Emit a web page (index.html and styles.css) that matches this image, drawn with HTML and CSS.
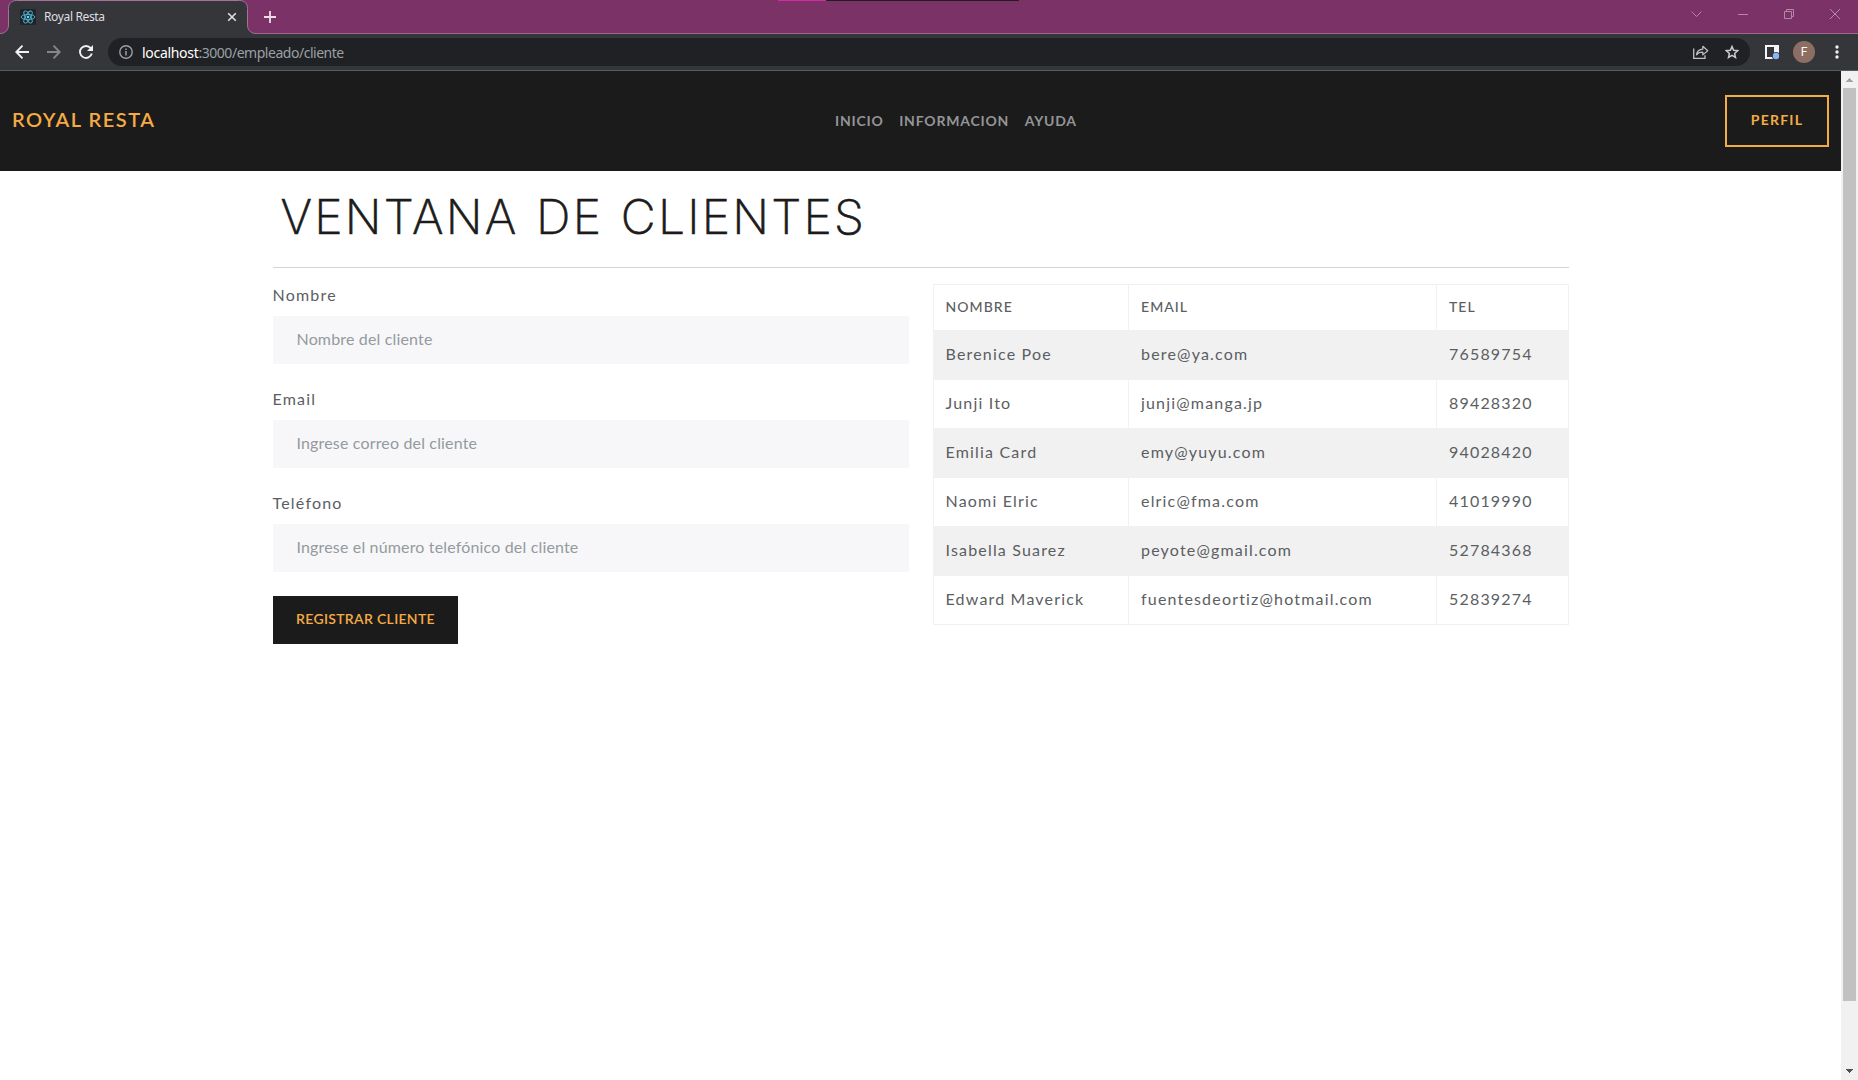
FILE: index.html
```
<!DOCTYPE html>
<html lang="es">
<head>
<meta charset="utf-8">
<title>Royal Resta</title>
<link rel="stylesheet" href="styles.css">
</head>
<body>
<div class="window">
  <div class="tabstrip">
    <div class="topmark"><i class="topmark-pink"></i><i class="topmark-dark"></i></div>
    <div class="tab">
      <svg class="tab-shape" width="256" height="34" viewBox="0 0 256 34">
        <path d="M0 34V33.5C5 33.5 8.5 30 8.5 25V8.5C8.5 3.5 11.5.5 16.500.5H239.500C244.500.5 247.500 3.500 247.500 8.500V25C247.500 30 251 33.500 256 33.500V34Z" fill="#35363a"/>
        <path d="M0 33.500C5 33.500 8.500 30 8.500 25V8.500C8.500 3.500 11.500.5 16.500.5H239.500C244.500.5 247.500 3.500 247.500 8.500V25C247.500 30 251 33.500 256 33.500" fill="none" stroke="#a4729b"/>
      </svg>
      <svg class="favicon" width="16" height="16" viewBox="0 0 16 16">
        <rect width="16" height="16" rx="1.500" fill="#20232a"/>
        <g fill="none" stroke="#4fb3cf" stroke-width=".9">
          <ellipse cx="8" cy="8" rx="6.800" ry="2.600"/>
          <ellipse cx="8" cy="8" rx="6.800" ry="2.600" transform="rotate(60 8 8)"/>
          <ellipse cx="8" cy="8" rx="6.800" ry="2.600" transform="rotate(120 8 8)"/>
        </g>
        <circle cx="8" cy="8" r="1.300" fill="#61dafb"/>
      </svg>
      <span class="tab-title">Royal Resta</span>
      <svg class="tab-close" width="10" height="10" viewBox="0 0 10 10"><path d="M1.200 1.200l7.600 7.600M8.800 1.200L1.200 8.800" stroke="#dfdfe1" stroke-width="1.600"/></svg>
    </div>
    <svg class="newtab" width="12" height="12" viewBox="0 0 12 12"><path d="M6 0v12M0 6h12" stroke="#ecdfe8" stroke-width="1.800"/></svg>
    <div class="controls">
      <svg width="11" height="10" viewBox="0 0 11 10"><path d="M.5 2.500l5 5 5-5" fill="none" stroke="#b586a5"/></svg>
      <svg width="10" height="10" viewBox="0 0 10 10"><path d="M0 5.500h10" stroke="#b586a5"/></svg>
      <svg width="10" height="10" viewBox="0 0 10 10"><path d="M.5 2.500h7v7h-7zM2.500 2.500v-2h7v7h-2" fill="none" stroke="#b586a5"/></svg>
      <svg width="10" height="10" viewBox="0 0 10 10"><path d="M0 0l10 10M10 0L0 10" stroke="#b586a5"/></svg>
    </div>
  </div>
  <div class="toolbar">
    <svg class="nav-icon" width="14" height="14" viewBox="0 0 14 14"><path d="M14 7H1.500M7.500.700L1.300 7l6.200 6.300" fill="none" stroke="#f1f1f1" stroke-width="1.900"/></svg>
    <svg class="nav-icon" width="14" height="14" viewBox="0 0 14 14"><path d="M0 7h12.500M6.500.700L12.700 7l-6.200 6.300" fill="none" stroke="#85868a" stroke-width="1.900"/></svg>
    <svg class="nav-icon" width="14" height="14" viewBox="0 0 14 14"><path d="M12.800 8.600A6 6 0 1 1 11.700 3.200" fill="none" stroke="#f1f1f1" stroke-width="1.900"/><path d="M14 0v6H8z" fill="#f1f1f1"/></svg>
    <div class="omnibox">
      <svg class="info" width="14" height="14" viewBox="0 0 14 14"><circle cx="7" cy="7" r="6.200" fill="none" stroke="#9aa0a6" stroke-width="1.400"/><path d="M7 6v4.500M7 3.400v1.500" stroke="#9aa0a6" stroke-width="1.500"/></svg>
      <span class="url"><b>localhost</b>:3000/empleado/cliente</span>
      <svg class="share" width="16" height="14" viewBox="0 0 16 14"><path d="M.700 3.500v9.800h11.300v-3" fill="none" stroke="#bdc1c6" stroke-width="1.300"/><path d="M3.500 9.800C4 6 6.200 4.400 9.800 4.200V1.300l5 4.400-5 4.200V7.200C7 7.100 5 7.800 3.500 9.800z" fill="none" stroke="#bdc1c6" stroke-width="1.200" stroke-linejoin="round"/></svg>
      <svg class="star" width="14" height="14" viewBox="0 0 14 14"><path d="M7 1.500l1.600 3.800 4.100.4-3.100 2.700.9 4L7 10.300l-3.500 2.100.9-4L1.300 5.700l4.100-.4z" fill="none" stroke="#c9ccd0" stroke-width="1.500"/></svg>
    </div>
    <svg class="panel" width="15" height="15" viewBox="0 0 15 15"><path d="M0 0h14v14H0z" fill="#f5f5f5"/><path d="M2 2h7v10H2z" fill="#35363a"/><circle cx="11" cy="11" r="4" fill="#35363a"/><circle cx="11" cy="11" r="3.200" fill="#8ab4f8"/></svg>
    <span class="avatar">F</span>
    <svg class="dots" width="4" height="14" viewBox="0 0 4 14"><g fill="#f1f1f1"><circle cx="2" cy="2" r="1.700"/><circle cx="2" cy="7" r="1.700"/><circle cx="2" cy="12" r="1.700"/></g></svg>
  </div>
  <div class="viewport">
    <div class="page">
      <header class="navbar">
        <a class="brand">ROYAL RESTA</a>
        <nav class="menu"><a>INICIO</a><a>INFORMACION</a><a>AYUDA</a></nav>
        <a class="profile">PERFIL</a>
      </header>
      <main class="container">
        <h1 class="title">VENTANA DE CLIENTES</h1>
        <div class="columns">
          <form class="form">
            <label for="nombre">Nombre</label>
            <input id="nombre" placeholder="Nombre del cliente">
            <label for="email">Email</label>
            <input id="email" placeholder="Ingrese correo del cliente">
            <label for="tel">Teléfono</label>
            <input id="tel" placeholder="Ingrese el número telefónico del cliente">
            <button class="submit" type="button">REGISTRAR CLIENTE</button>
          </form>
          <table class="clients">
            <colgroup><col class="col-name"><col class="col-email"><col></colgroup>
            <thead><tr><th>NOMBRE</th><th>EMAIL</th><th>TEL</th></tr></thead>
            <tbody>
              <tr><td>Berenice Poe</td><td>bere@ya.com</td><td>76589754</td></tr>
              <tr><td>Junji Ito</td><td>junji@manga.jp</td><td>89428320</td></tr>
              <tr><td>Emilia Card</td><td>emy@yuyu.com</td><td>94028420</td></tr>
              <tr><td>Naomi Elric</td><td>elric@fma.com</td><td>41019990</td></tr>
              <tr><td>Isabella Suarez</td><td>peyote@gmail.com</td><td>52784368</td></tr>
              <tr><td>Edward Maverick</td><td>fuentesdeortiz@hotmail.com</td><td>52839274</td></tr>
            </tbody>
          </table>
        </div>
      </main>
    </div>
    <div class="scrollbar">
      <svg width="17" height="17" viewBox="0 0 17 17" shape-rendering="crispEdges"><path d="M5 11l3.500-4 3.500 4z" fill="#a3a3a3"/></svg>
      <div class="thumb"></div>
      <svg width="17" height="17" viewBox="0 0 17 17" shape-rendering="crispEdges"><path d="M5 6l3.500 4L12 6z" fill="#505050"/></svg>
    </div>
  </div>
</div>
</body>
</html>
```
FILE: styles.css
```
* { box-sizing: border-box; }
body { margin: 0; background: #fff; font-family: Lato, sans-serif; color: #5b5e62; }
svg { display: block; flex: none; }
.window { width: 1858px; height: 1080px; display: flex; flex-direction: column; overflow: hidden; }

.tabstrip { position: relative; height: 34px; flex: none; display: flex; background: #7b3266; border-bottom: 1px solid #9b6a8c; }
.topmark { position: absolute; top: 0; left: 778px; width: 241px; height: 1px; display: flex; }
.topmark-pink { width: 48px; background: #d42ba5; }
.topmark-dark { flex: 1; background: #1f1f1f; }
.tab { position: relative; width: 256px; height: 34px; flex: none; display: flex; align-items: center; padding: 0 19px 0 20px; font-family: "Noto Sans", sans-serif; }
.tab-shape { position: absolute; left: 0; top: 0; }
.favicon { position: relative; }
.tab-title { position: relative; flex: 1; margin-left: 8px; padding-bottom: 1px; font-size: 12px; letter-spacing: -.36px; color: #dfdfe1; }
.tab-close { position: relative; }
.newtab { margin: 11px 0 0 8px; }
.controls { display: flex; gap: 36px; margin: 9px 18px 0 auto; }

.toolbar { height: 37px; flex: none; display: flex; align-items: center; padding: 0 19px 0 15px; background: #35363a; border-bottom: 1px solid #5b5c60; }
.nav-icon { margin-right: 18px; }
.omnibox { flex: 1; height: 28px; margin-left: -3px; display: flex; align-items: center; padding: 0 11px; border-radius: 14px; background: #202124; }
.url { flex: 1; margin-left: 9px; font: 14px "Noto Sans", sans-serif; letter-spacing: -.47px; color: #9aa0a6; }
.url b { font-weight: 400; letter-spacing: -.3px; color: #fff; }
.share { margin-right: 16px; }
.panel { margin-left: 15px; }
.avatar { width: 22px; height: 22px; margin: 0 20px 0 13px; border-radius: 50%; background: #8d6e63; color: #fff; font: 12px/22px Roboto, sans-serif; text-align: center; }

.viewport { flex: 1; display: flex; min-height: 0; }
.page { flex: 1; }
.navbar { height: 100px; display: flex; align-items: center; padding: 0 12px; background: #1b1b1b; }
.brand { width: 823px; padding-bottom: 4px; font-size: 20px; font-weight: 600; letter-spacing: 1.500px; color: #f4ab45; }
.menu { display: flex; gap: 15.500px; padding-bottom: 2px; font-size: 14px; font-weight: 700; letter-spacing: .800px; color: #949597; }
.profile { width: 104px; height: 52px; margin-left: auto; border: 2px solid #f4ab45; color: #f4ab45; font-size: 14px; font-weight: 700; line-height: 46px; letter-spacing: 1.200px; text-align: center; }

.container { width: 1296px; margin: 0 auto; }
.title { height: 97px; margin: 0 0 16px; padding: 14px 0 0 8px; border-bottom: 1px solid #d4d4d5; color: #1b1b1b; font: 200 48px/64px Inter, sans-serif; letter-spacing: 2.250px; word-spacing: 1.800px; -webkit-text-stroke: .7px #1b1b1b; }
.columns { display: grid; grid-template-columns: 1fr 1fr; gap: 24px; align-items: start; }
.form { display: flex; flex-direction: column; align-items: flex-start; }
.form label { height: 32px; font-size: 16px; line-height: 22px; letter-spacing: 1.200px; }
.form input { width: 100%; height: 48px; margin-bottom: 24px; padding: 0 24px 3px; border: 0; background: #f7f7f9; font: 16px Lato, sans-serif; letter-spacing: .16px; }
.form input::placeholder { color: #949a9e; opacity: 1; }
.submit { width: 185px; height: 48px; padding: 0 0 3px 1px; border: 0; background: #1b1b1b; color: #f4ab45; font: 600 14px Lato, sans-serif; letter-spacing: .310px; }

.clients { width: 636px; table-layout: fixed; border-collapse: collapse; letter-spacing: 1.180px; font-size: 16px; line-height: 24px; }
.col-name { width: 195.500px; }
.col-email { width: 308px; }
.clients th, .clients td { height: 49px; padding: 0 12px 2px; border: 1px solid #f1f1f1; text-align: left; }
.clients th { height: 46px; font-size: 14px; font-weight: 500; letter-spacing: 1.050px; }
.clients tbody tr:nth-child(odd) { background: #f1f1f1; }

.scrollbar { width: 17px; display: flex; flex-direction: column; background: #f1f1f1; }
.thumb { width: 13px; height: 913px; margin: 0 2px auto; background: #c1c1c1; }
```
